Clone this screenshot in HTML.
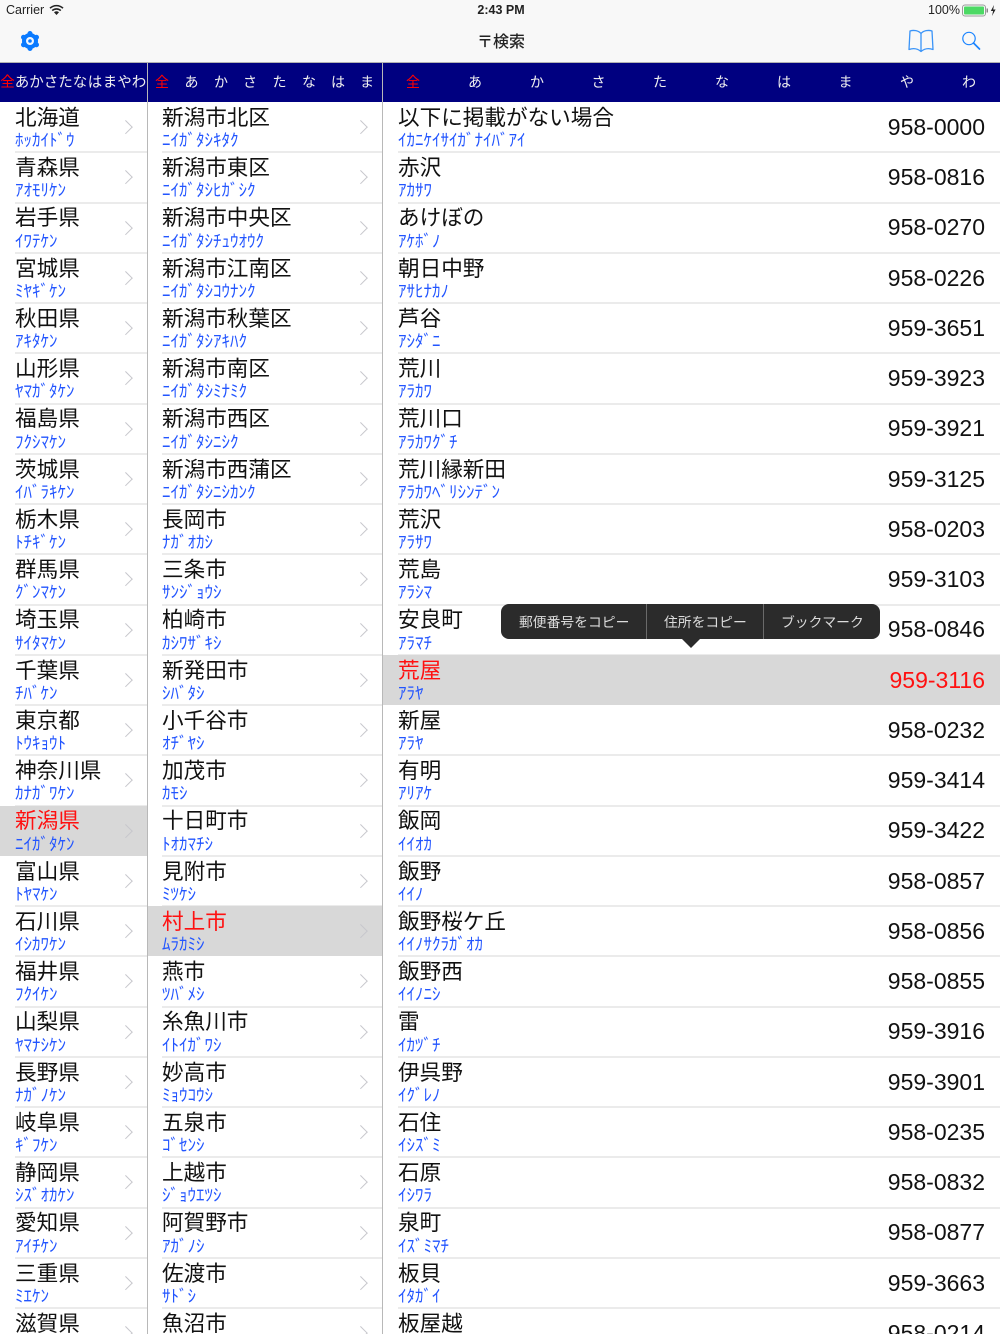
<!DOCTYPE html>
<html lang="ja"><head><meta charset="utf-8"><title>〒検索</title>
<style>
*{box-sizing:border-box;margin:0;padding:0}
html,body{width:1000px;height:1334px;overflow:hidden;background:#fff}
body{position:relative;font-family:"Liberation Sans","Noto Sans CJK JP",sans-serif;color:#111}
.abs{position:absolute}
#head{left:0;top:0;width:1000px;height:63px;background:#f8f8f8;border-bottom:1px solid #b2b2b2}
#bar{left:0;top:63px;width:1000px;height:39px;background:#000080}
.t{position:absolute;top:0;line-height:38px;color:#f0f0f0;transform:translateX(-50%);font-family:"Noto Sans CJK JP",sans-serif}
.a{color:#ff0000}
.l .t{font-size:14.5px}.m .t{font-size:14px}.h .t{font-size:14px}
.col{position:absolute;top:102px;height:1232px;overflow:hidden;background:#fff}
.r{position:relative;height:50.25px}
.r::before{content:"";position:absolute;bottom:-1px;right:0;height:2px;background:#ebebeb}
#c1 .r::before,#c3 .r::before{left:15px}
#c2 .r::before{left:14px}
.n{position:absolute;left:15px;top:-.1px;font-size:21.6px;line-height:30px;white-space:nowrap;font-family:"Noto Sans CJK JP",sans-serif}
.k{position:absolute;left:15px;top:26px;font-size:17px;line-height:21px;color:#2255ff;white-space:nowrap;font-family:"Noto Sans CJK JP",sans-serif}
#c2 .n,#c2 .k{left:14px}
#c3 .n,#c3 .k{left:15px}
.z{position:absolute;right:15px;top:9.9px;font-size:23px;line-height:30px}
#c1 .r::after,#c2 .r::after{content:"";position:absolute;top:20px;width:8.5px;height:8.5px;border-top:1.8px solid #c7c7cc;border-right:1.8px solid #c7c7cc;transform:rotate(45deg)}
#c1 .r::after{right:16.75px}
#c2 .r::after{right:16.75px}
.s{background:#d8d8d8}
.s .n,.s .z{color:#ff1010}
.s::before{display:none}
.vl{top:63px;width:1px;height:1271px;background:#b8b8b8}
#pop{left:501px;top:604px;width:379px;height:35px;background:#2b2b2b;border-radius:8px;color:#dcdcdc;font-size:13.8px;line-height:35px;font-family:"Noto Sans CJK JP",sans-serif}
#pop span{position:absolute;top:0;white-space:nowrap}
#pop i{position:absolute;top:0;width:1px;height:35px;background:#6a6a6a}
</style></head><body>

<div class="abs" id="head">
<div class="abs" style="left:6px;top:3px;font-size:12.5px;line-height:15px;color:#222">Carrier</div>
<svg class="abs" style="left:49px;top:4px" width="15" height="12" viewBox="0 0 15 12"><path d="M1 4.2a9.5 9.5 0 0 1 13 0M3.2 6.6a6.3 6.3 0 0 1 8.6 0" fill="none" stroke="#222" stroke-width="1.6"/><path d="M5 8.3a3.6 3.6 0 0 1 5 0L7.5 11z" fill="#222"/></svg>
<div class="abs" style="left:401px;width:200px;text-align:center;top:3px;font-size:12.5px;line-height:15px;font-weight:bold;color:#222">2:43 PM</div>
<div class="abs" style="left:928px;top:3px;font-size:12.5px;line-height:15px;color:#222">100%</div>
<svg class="abs" style="left:961.5px;top:4px" width="36" height="13" viewBox="0 0 36 13"><rect x=".5" y="1" width="23" height="11" rx="2.5" fill="none" stroke="#9a9a9a"/><rect x="2" y="2.5" width="20" height="8" rx="1" fill="#4cd964"/><rect x="24.5" y="4.5" width="1.5" height="4" fill="#888"/><path d="M32 1l-3.2 6h2.3L30 12l3.6-6.5h-2.4z" fill="#222"/></svg>
<div class="abs" style="left:401px;width:200px;text-align:center;top:28px;font-size:16px;line-height:24px;color:#222;font-family:'Noto Sans CJK JP',sans-serif;font-weight:500">〒検索</div>
<svg class="abs" style="left:18px;top:29px" width="24" height="24" viewBox="0 0 24 24"><circle cx="12" cy="12" r="8" fill="#0a7aff"/><g stroke="#0a7aff" stroke-width="5" stroke-linecap="round"><path d="M12 4.700v-.2M12 19.300v.2M5.700 8.350l-.2-.1M18.300 15.650l.2.1M5.700 15.650l-.2.1M18.300 8.350l.2-.1"/></g><circle cx="12" cy="12" r="4" fill="#f0f6ff"/><circle cx="12" cy="12" r="1.800" fill="#0a7aff"/></svg>
<svg class="abs" style="left:907px;top:28px" width="28" height="26" viewBox="0 0 28 26"><path d="M14 5.5C11.5 2.5 6.5 1.800 3 3L2 21.500C6 20 10.500 20.500 14 23.500C17.500 20.500 22 20 26 21.500L25 3C21.500 1.800 16.500 2.500 14 5.500ZM14 5.500V23.500" fill="none" stroke="#3a94f8" stroke-width="1.3" stroke-linejoin="round"/></svg>
<svg class="abs" style="left:960px;top:29px" width="22" height="22" viewBox="0 0 22 22"><circle cx="9" cy="9.500" r="6.200" fill="none" stroke="#1a84ff" stroke-width="1.200"/><path d="M13.500 14l6 6" stroke="#1a84ff" stroke-width="1.700" stroke-linecap="round"/></svg>
</div>

<div class="abs" id="bar">
<div class="l">
<span class="t a" style="left:7.500px">全</span><span class="t" style="left:22px">あ</span><span class="t" style="left:36.500px">か</span><span class="t" style="left:51px">さ</span><span class="t" style="left:65.500px">た</span><span class="t" style="left:80px">な</span><span class="t" style="left:95px">は</span><span class="t" style="left:110px">ま</span><span class="t" style="left:124.500px">や</span><span class="t" style="left:139px">わ</span>
</div>
<div class="m">
<span class="t a" style="left:162px">全</span><span class="t" style="left:191.500px">あ</span><span class="t" style="left:221px">か</span><span class="t" style="left:250px">さ</span><span class="t" style="left:279.500px">た</span><span class="t" style="left:309px">な</span><span class="t" style="left:338px">は</span><span class="t" style="left:367px">ま</span>
</div>
<div class="h">
<span class="t a" style="left:413px">全</span><span class="t" style="left:475px">あ</span><span class="t" style="left:537px">か</span><span class="t" style="left:598.500px">さ</span><span class="t" style="left:660px">た</span><span class="t" style="left:722px">な</span><span class="t" style="left:784px">は</span><span class="t" style="left:845.500px">ま</span><span class="t" style="left:907px">や</span><span class="t" style="left:969px">わ</span>
</div>
</div>

<div class="col" id="c1" style="left:0;width:147px">
<div class="r"><span class="n">北海道</span><span class="k">ﾎｯｶｲﾄﾞｳ</span></div>
<div class="r"><span class="n">青森県</span><span class="k">ｱｵﾓﾘｹﾝ</span></div>
<div class="r"><span class="n">岩手県</span><span class="k">ｲﾜﾃｹﾝ</span></div>
<div class="r"><span class="n">宮城県</span><span class="k">ﾐﾔｷﾞｹﾝ</span></div>
<div class="r"><span class="n">秋田県</span><span class="k">ｱｷﾀｹﾝ</span></div>
<div class="r"><span class="n">山形県</span><span class="k">ﾔﾏｶﾞﾀｹﾝ</span></div>
<div class="r"><span class="n">福島県</span><span class="k">ﾌｸｼﾏｹﾝ</span></div>
<div class="r"><span class="n">茨城県</span><span class="k">ｲﾊﾞﾗｷｹﾝ</span></div>
<div class="r"><span class="n">栃木県</span><span class="k">ﾄﾁｷﾞｹﾝ</span></div>
<div class="r"><span class="n">群馬県</span><span class="k">ｸﾞﾝﾏｹﾝ</span></div>
<div class="r"><span class="n">埼玉県</span><span class="k">ｻｲﾀﾏｹﾝ</span></div>
<div class="r"><span class="n">千葉県</span><span class="k">ﾁﾊﾞｹﾝ</span></div>
<div class="r"><span class="n">東京都</span><span class="k">ﾄｳｷｮｳﾄ</span></div>
<div class="r"><span class="n">神奈川県</span><span class="k">ｶﾅｶﾞﾜｹﾝ</span></div>
<div class="r s"><span class="n">新潟県</span><span class="k">ﾆｲｶﾞﾀｹﾝ</span></div>
<div class="r"><span class="n">富山県</span><span class="k">ﾄﾔﾏｹﾝ</span></div>
<div class="r"><span class="n">石川県</span><span class="k">ｲｼｶﾜｹﾝ</span></div>
<div class="r"><span class="n">福井県</span><span class="k">ﾌｸｲｹﾝ</span></div>
<div class="r"><span class="n">山梨県</span><span class="k">ﾔﾏﾅｼｹﾝ</span></div>
<div class="r"><span class="n">長野県</span><span class="k">ﾅｶﾞﾉｹﾝ</span></div>
<div class="r"><span class="n">岐阜県</span><span class="k">ｷﾞﾌｹﾝ</span></div>
<div class="r"><span class="n">静岡県</span><span class="k">ｼｽﾞｵｶｹﾝ</span></div>
<div class="r"><span class="n">愛知県</span><span class="k">ｱｲﾁｹﾝ</span></div>
<div class="r"><span class="n">三重県</span><span class="k">ﾐｴｹﾝ</span></div>
<div class="r"><span class="n">滋賀県</span><span class="k">ｼｶﾞｹﾝ</span></div>
</div>

<div class="col" id="c2" style="left:148px;width:234px">
<div class="r"><span class="n">新潟市北区</span><span class="k">ﾆｲｶﾞﾀｼｷﾀｸ</span></div>
<div class="r"><span class="n">新潟市東区</span><span class="k">ﾆｲｶﾞﾀｼﾋｶﾞｼｸ</span></div>
<div class="r"><span class="n">新潟市中央区</span><span class="k">ﾆｲｶﾞﾀｼﾁｭｳｵｳｸ</span></div>
<div class="r"><span class="n">新潟市江南区</span><span class="k">ﾆｲｶﾞﾀｼｺｳﾅﾝｸ</span></div>
<div class="r"><span class="n">新潟市秋葉区</span><span class="k">ﾆｲｶﾞﾀｼｱｷﾊｸ</span></div>
<div class="r"><span class="n">新潟市南区</span><span class="k">ﾆｲｶﾞﾀｼﾐﾅﾐｸ</span></div>
<div class="r"><span class="n">新潟市西区</span><span class="k">ﾆｲｶﾞﾀｼﾆｼｸ</span></div>
<div class="r"><span class="n">新潟市西蒲区</span><span class="k">ﾆｲｶﾞﾀｼﾆｼｶﾝｸ</span></div>
<div class="r"><span class="n">長岡市</span><span class="k">ﾅｶﾞｵｶｼ</span></div>
<div class="r"><span class="n">三条市</span><span class="k">ｻﾝｼﾞｮｳｼ</span></div>
<div class="r"><span class="n">柏崎市</span><span class="k">ｶｼﾜｻﾞｷｼ</span></div>
<div class="r"><span class="n">新発田市</span><span class="k">ｼﾊﾞﾀｼ</span></div>
<div class="r"><span class="n">小千谷市</span><span class="k">ｵﾁﾞﾔｼ</span></div>
<div class="r"><span class="n">加茂市</span><span class="k">ｶﾓｼ</span></div>
<div class="r"><span class="n">十日町市</span><span class="k">ﾄｵｶﾏﾁｼ</span></div>
<div class="r"><span class="n">見附市</span><span class="k">ﾐﾂｹｼ</span></div>
<div class="r s"><span class="n">村上市</span><span class="k">ﾑﾗｶﾐｼ</span></div>
<div class="r"><span class="n">燕市</span><span class="k">ﾂﾊﾞﾒｼ</span></div>
<div class="r"><span class="n">糸魚川市</span><span class="k">ｲﾄｲｶﾞﾜｼ</span></div>
<div class="r"><span class="n">妙高市</span><span class="k">ﾐｮｳｺｳｼ</span></div>
<div class="r"><span class="n">五泉市</span><span class="k">ｺﾞｾﾝｼ</span></div>
<div class="r"><span class="n">上越市</span><span class="k">ｼﾞｮｳｴﾂｼ</span></div>
<div class="r"><span class="n">阿賀野市</span><span class="k">ｱｶﾞﾉｼ</span></div>
<div class="r"><span class="n">佐渡市</span><span class="k">ｻﾄﾞｼ</span></div>
<div class="r"><span class="n">魚沼市</span><span class="k">ｳｵﾇﾏｼ</span></div>
</div>

<div class="col" id="c3" style="left:383px;width:617px">
<div class="r"><span class="n">以下に掲載がない場合</span><span class="k">ｲｶﾆｹｲｻｲｶﾞﾅｲﾊﾞｱｲ</span><span class="z">958-0000</span></div>
<div class="r"><span class="n">赤沢</span><span class="k">ｱｶｻﾜ</span><span class="z">958-0816</span></div>
<div class="r"><span class="n">あけぼの</span><span class="k">ｱｹﾎﾞﾉ</span><span class="z">958-0270</span></div>
<div class="r"><span class="n">朝日中野</span><span class="k">ｱｻﾋﾅｶﾉ</span><span class="z">958-0226</span></div>
<div class="r"><span class="n">芦谷</span><span class="k">ｱｼﾀﾞﾆ</span><span class="z">959-3651</span></div>
<div class="r"><span class="n">荒川</span><span class="k">ｱﾗｶﾜ</span><span class="z">959-3923</span></div>
<div class="r"><span class="n">荒川口</span><span class="k">ｱﾗｶﾜｸﾞﾁ</span><span class="z">959-3921</span></div>
<div class="r"><span class="n">荒川縁新田</span><span class="k">ｱﾗｶﾜﾍﾞﾘｼﾝﾃﾞﾝ</span><span class="z">959-3125</span></div>
<div class="r"><span class="n">荒沢</span><span class="k">ｱﾗｻﾜ</span><span class="z">958-0203</span></div>
<div class="r"><span class="n">荒島</span><span class="k">ｱﾗｼﾏ</span><span class="z">959-3103</span></div>
<div class="r"><span class="n">安良町</span><span class="k">ｱﾗﾏﾁ</span><span class="z">958-0846</span></div>
<div class="r s"><span class="n">荒屋</span><span class="k">ｱﾗﾔ</span><span class="z">959-3116</span></div>
<div class="r"><span class="n">新屋</span><span class="k">ｱﾗﾔ</span><span class="z">958-0232</span></div>
<div class="r"><span class="n">有明</span><span class="k">ｱﾘｱｹ</span><span class="z">959-3414</span></div>
<div class="r"><span class="n">飯岡</span><span class="k">ｲｲｵｶ</span><span class="z">959-3422</span></div>
<div class="r"><span class="n">飯野</span><span class="k">ｲｲﾉ</span><span class="z">958-0857</span></div>
<div class="r"><span class="n">飯野桜ケ丘</span><span class="k">ｲｲﾉｻｸﾗｶﾞｵｶ</span><span class="z">958-0856</span></div>
<div class="r"><span class="n">飯野西</span><span class="k">ｲｲﾉﾆｼ</span><span class="z">958-0855</span></div>
<div class="r"><span class="n">雷</span><span class="k">ｲｶﾂﾞﾁ</span><span class="z">959-3916</span></div>
<div class="r"><span class="n">伊呉野</span><span class="k">ｲｸﾞﾚﾉ</span><span class="z">959-3901</span></div>
<div class="r"><span class="n">石住</span><span class="k">ｲｼｽﾞﾐ</span><span class="z">958-0235</span></div>
<div class="r"><span class="n">石原</span><span class="k">ｲｼﾜﾗ</span><span class="z">958-0832</span></div>
<div class="r"><span class="n">泉町</span><span class="k">ｲｽﾞﾐﾏﾁ</span><span class="z">958-0877</span></div>
<div class="r"><span class="n">板貝</span><span class="k">ｲﾀｶﾞｲ</span><span class="z">959-3663</span></div>
<div class="r"><span class="n">板屋越</span><span class="k">ｲﾀﾔｺﾞｼ</span><span class="z">958-0214</span></div>
</div>

<div class="abs vl" style="left:147px"></div>
<div class="abs vl" style="left:382px"></div>

<div class="abs" id="pop">
<span style="left:18px">郵便番号をコピー</span><i style="left:145px"></i>
<span style="left:163px">住所をコピー</span><i style="left:262px"></i>
<span style="left:280px">ブックマーク</span>
</div>
<svg class="abs" style="left:682px;top:639px" width="18" height="9" viewBox="0 0 18 9"><path d="M0 0H18L9 9z" fill="#2b2b2b"/></svg>
</body></html>
